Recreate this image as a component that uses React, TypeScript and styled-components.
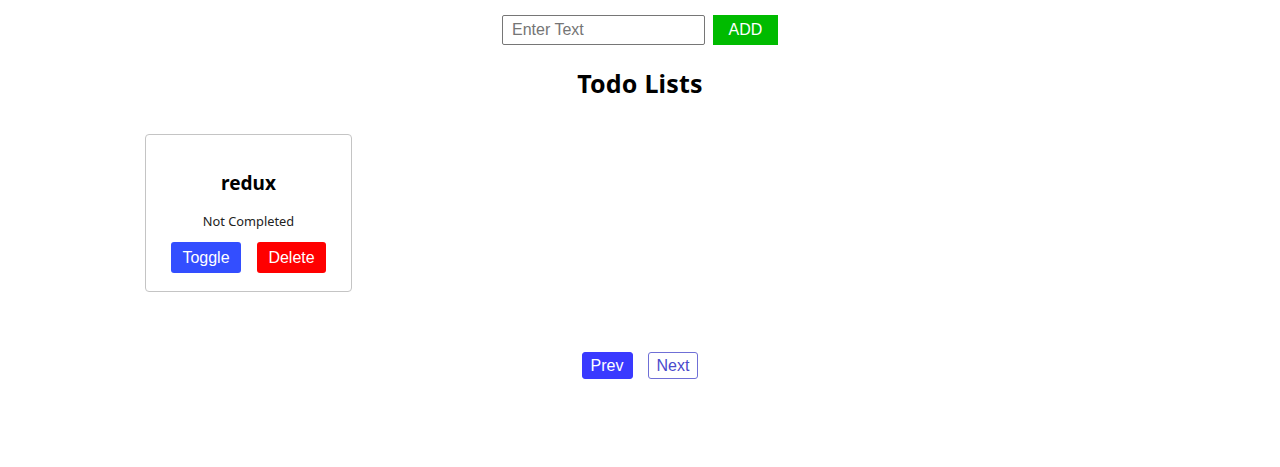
import React from "react";
import styled, { createGlobalStyle } from "styled-components";

const Global = createGlobalStyle`
  html, body { margin: 0; padding: 0; background: #fff; }
  body { font-family: "Noto Sans", "Open Sans", sans-serif; color: #000; }
`;

const Page = styled.div`
  display: flex;
  flex-direction: column;
  align-items: center;
  padding-top: 15px;
  width: 1280px;
`;

const AddBar = styled.div`
  display: flex;
  gap: 8px;
  align-items: stretch;
`;

const TextInput = styled.input`
  width: 203px;
  height: 30px;
  box-sizing: border-box;
  border: 1px solid #767676;
  border-radius: 2px;
  padding: 0 9px;
  font-family: "Liberation Sans", Arial, sans-serif;
  font-size: 16px;
  color: #000;
  &::placeholder { color: #757575; }
`;

const AddButton = styled.button`
  width: 65px;
  height: 30px;
  border: none;
  background: #00bb00;
  color: #fff;
  font-family: "Liberation Sans", Arial, sans-serif;
  font-size: 16px;
  padding: 0;
`;

const Title = styled.h2`
  margin: 20px 0 0;
  font-family: "Noto Sans", "Open Sans", sans-serif;
  font-size: 25px;
  font-weight: 700;
  line-height: 36px;
  letter-spacing: 0.2px;
`;

const Grid = styled.div`
  align-self: stretch;
  display: flex;
  flex-wrap: wrap;
  padding: 33px 145px 0;
`;

const Card = styled.div`
  width: 207px;
  height: 158px;
  box-sizing: border-box;
  border: 1px solid #c4c4c4;
  border-radius: 4px;
  display: flex;
  flex-direction: column;
  align-items: center;
  padding-top: 34px;
`;

const CardTitle = styled.h3`
  margin: 0;
  font-size: 19px;
  font-weight: 700;
  line-height: 28px;
`;

const Status = styled.p`
  margin: 15px 0 0;
  font-size: 12.8px;
  line-height: 18px;
  color: #222;
`;

const Actions = styled.div`
  display: flex;
  gap: 16px;
  margin-top: 12px;
`;

const ActionButton = styled.button<{ $bg: string; $w: number }>`
  width: ${(p) => p.$w}px;
  height: 31px;
  border: none;
  border-radius: 3px;
  background: ${(p) => p.$bg};
  color: #fff;
  font-family: "Liberation Sans", Arial, sans-serif;
  font-size: 16px;
  padding: 0;
`;

const Pager = styled.div`
  display: flex;
  gap: 15px;
  margin-top: 60px;
`;

const PageButton = styled.button<{ $active?: boolean }>`
  height: 27px;
  box-sizing: border-box;
  padding: 0 8px;
  min-width: 49px;
  border-radius: 3px;
  border: 1px solid ${(p) => (p.$active ? "#3a3aff" : "#6f6fd6")};
  background: ${(p) => (p.$active ? "#3a3aff" : "#fff")};
  color: ${(p) => (p.$active ? "#fff" : "#4a4acc")};
  font-family: "Liberation Sans", Arial, sans-serif;
  font-size: 16px;
`;

export default function App() {
  return (
    <>
      <Global />
      <Page>
        <AddBar>
          <TextInput placeholder="Enter Text" />
          <AddButton>ADD</AddButton>
        </AddBar>
        <Title>Todo Lists</Title>
        <Grid>
          <Card>
            <CardTitle>redux</CardTitle>
            <Status>Not Completed</Status>
            <Actions>
              <ActionButton $bg="#334eff" $w={70}>Toggle</ActionButton>
              <ActionButton $bg="#ff0000" $w={69}>Delete</ActionButton>
            </Actions>
          </Card>
        </Grid>
        <Pager>
          <PageButton $active>Prev</PageButton>
          <PageButton>Next</PageButton>
        </Pager>
      </Page>
    </>
  );
}
